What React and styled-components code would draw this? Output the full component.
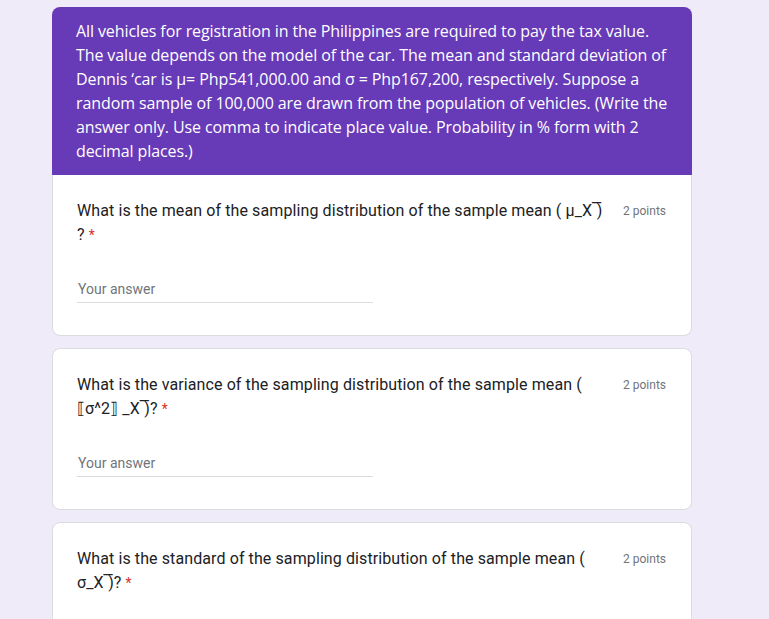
import styled, { createGlobalStyle } from "styled-components"

const GlobalStyle = createGlobalStyle`
  html, body {
    margin: 0;
    background: #f0ebf8;
  }
  body {
    font-family: Roboto, "Liberation Sans", Arial, sans-serif;
  }
`

const _Page = styled.div`
  display: flex;
  flex-direction: column;
  gap: 12px;
  width: 640px;
  margin: 7px 0 0 52px;
`

const _Group = styled.div`
  display: flex;
  flex-direction: column;
`

const _Header = styled.div`
  background: #673ab7;
  border-radius: 8px 8px 0 0;
  padding: 12px 24px;
  color: #fff;
  font-family: "Open Sans", "Noto Sans", sans-serif;
  font-size: 16px;
  line-height: 24px;
  letter-spacing: -0.1px;
`

const _Card = styled.div`
  background: #fff;
  border: 1px solid #dadce0;
  border-radius: ${(p) => (p.$joined ? "0 0 8px 8px" : "8px")};
  border-top: ${(p) => (p.$joined ? "none" : "1px solid #dadce0")};
  padding: 24px 24px 32px;
  min-height: ${(p) => p.$min || 0}px;
`

const _TitleRow = styled.div`
  display: flex;
  justify-content: space-between;
  align-items: flex-start;
  gap: 12px;
`

const _Question = styled.div`
  font-size: 16px;
  line-height: 24px;
  color: #202124;
  letter-spacing: 0.1px;
`

const _Required = styled.span`
  color: #d93025;
  padding-left: 4px;
  font-size: 14px;
`

const _Points = styled.span`
  flex: none;
  font-size: 12px;
  line-height: 24px;
  color: #70757a;
  padding-right: 1px;
`

const _Answer = styled.div`
  width: 50%;
  margin-top: 28px;
  padding: 4px 0 3px 1px;
  border-bottom: 1px solid #dadce0;
  font-size: 14px;
  line-height: 20px;
  color: #70757a;
`

const Question = ({ children, joined, answer = true, min }) => (
  <_Card $joined={joined} $min={min}>
    <_TitleRow>
      <_Question>
        {children}
        <_Required>*</_Required>
      </_Question>
      <_Points>2 points</_Points>
    </_TitleRow>
    {answer && <_Answer>Your answer</_Answer>}
  </_Card>
)

export default function App() {
  return (
    <_Page>
      <GlobalStyle />
      <_Group>
        <_Header>
          All vehicles for registration in the Philippines are required to pay the tax value. The value
          depends on the model of the car. The mean and standard deviation of Dennis ‘car is μ=
          Php541,000.00 and σ = Php167,200, respectively. Suppose a random sample of 100,000 are drawn
          from the population of vehicles. (Write the answer only. Use comma to indicate place value.
          Probability in % form with 2 decimal places.)
        </_Header>
        <Question joined>
          What is the mean of the sampling distribution of the sample mean ( μ_X ̅) ?
        </Question>
      </_Group>
      <Question>
        What is the variance of the sampling distribution of the sample mean ( ⟦σ^2⟧ _X ̅)?
      </Question>
      <Question answer={false} min={120}>
        What is the standard of the sampling distribution of the sample mean ( σ_X ̅)?
      </Question>
    </_Page>
  )
}
